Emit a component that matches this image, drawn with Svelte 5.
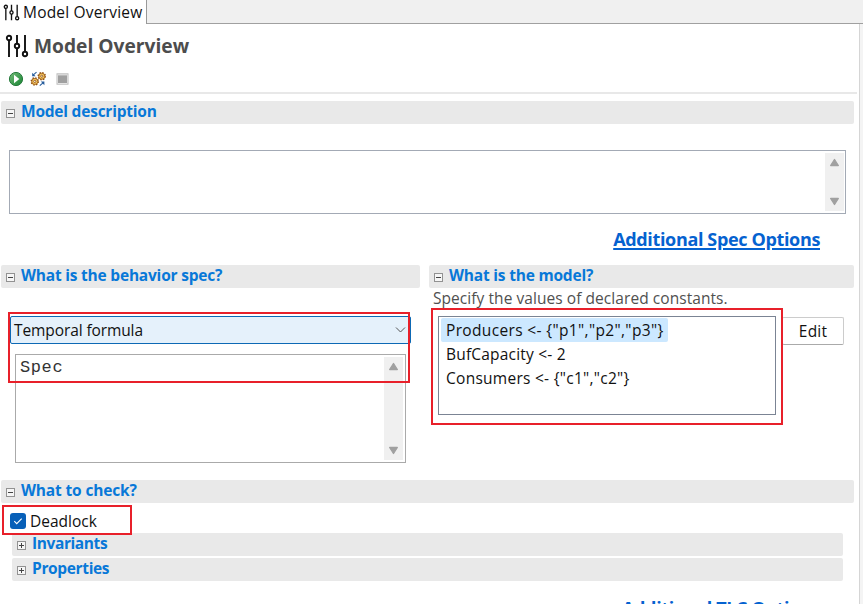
<script>
  const constants = [
    { text: 'Producers <- {"p1","p2","p3"}', selected: true, ls: 0.35 },
    { text: 'BufCapacity <- 2', ls: 0.2 },
    { text: 'Consumers <- {"c1","c2"}', ls: 0.27 },
  ];
</script>

{#snippet sliders(size)}
  <svg width={size} height={size} viewBox="0 0 24 24" fill="none" stroke="#111" stroke-width="1.9">
    <circle cx="4" cy="4" r="2.2" /><path d="M4 6.2V23" />
    <path d="M12 1v8.8M12 14.2V23" /><circle cx="12" cy="12" r="2.2" />
    <path d="M20 1v16.8" /><circle cx="20" cy="20" r="2.2" />
  </svg>
{/snippet}

{#snippet toggle(open)}
  <svg class="toggle" width="9" height="9" viewBox="0 0 9 9" shape-rendering="crispEdges">
    <rect x=".5" y=".5" width="8" height="8" fill="#f6f6f6" stroke="#929292" />
    <path d="M2 4.5h5" stroke="#444" />
    {#if !open}<path d="M4.5 2v5" stroke="#444" />{/if}
  </svg>
{/snippet}

{#snippet bar(title, open, ls)}
  <div class="bar">{@render toggle(open)}<b style:letter-spacing="{ls}px">{title}</b></div>
{/snippet}

{#snippet scrollbar()}
  <div class="scroll">
    <svg width="11" height="9" viewBox="0 0 11 9"><path d="M5.5 1.5 9.3 7.5H1.7z" fill="#a0a0a0" stroke="#a0a0a0" stroke-width="1.4" stroke-linejoin="round" /></svg>
    <svg width="11" height="9" viewBox="0 0 11 9"><path d="M5.5 7.5 9.3 1.5H1.7z" fill="#a0a0a0" stroke="#a0a0a0" stroke-width="1.4" stroke-linejoin="round" /></svg>
  </div>
{/snippet}

<div class="window">
  <div class="tabs">
    <div class="tab">{@render sliders(17)}<span>Model Overview</span></div>
    <div class="rest"></div>
  </div>
  <div class="body">
    <main>
      <header>
        <h1>{@render sliders(24)}<span>Model Overview</span></h1>
        <div class="tools">
          <svg width="16" height="16" viewBox="0 0 16 16">
            <defs><linearGradient id="run" x2="1" y2="1"><stop stop-color="#75bd79" /><stop offset="1" stop-color="#168332" /></linearGradient></defs>
            <circle cx="8" cy="8" r="6.6" fill="url(#run)" stroke="#287b3e" />
            <path d="M6 3.8 11.3 8 6 12.2z" fill="#fff" />
          </svg>
          <svg width="17" height="16" viewBox="0 0 17 16">
            <g fill="#f7c95e" stroke="#8c4a12">
              <circle cx="4.8" cy="10.4" r="3.5" stroke-width="1.5" stroke-dasharray="1.4 1.35" />
              <circle cx="4.8" cy="10.4" r="3" stroke-width=".7" />
              <circle cx="11.8" cy="5.2" r="3.5" stroke-width="1.5" stroke-dasharray="1.4 1.35" />
              <circle cx="11.8" cy="5.2" r="3" stroke-width=".7" />
            </g>
            <circle cx="4.8" cy="10.4" r="1.1" fill="#fff" stroke="#8c4a12" stroke-width=".8" />
            <circle cx="11.8" cy="5.2" r="1.1" fill="#fff" stroke="#8c4a12" stroke-width=".8" />
            <g fill="#245b9b" stroke="#245b9b" stroke-width="1.1">
              <path d="M6.5 1.2 3.4 3.8" /><path d="M2.2 1.8v3.4h3.4z" stroke="none" />
              <path d="M9.8 14.6l3.2-2.8" /><path d="M10.8 10.6h3.6v3.6z" stroke="none" />
            </g>
          </svg>
          <svg width="13" height="12" viewBox="0 0 13 12">
            <rect x="1" y=".8" width="11" height="10.4" fill="#f5f5f5" stroke="#bbb" />
            <rect x="2" y="3" width="9" height="7" fill="#a0a0a0" />
            <path d="M2 2.3h9" stroke="#aaa" />
          </svg>
        </div>
      </header>

      <section class="description">
        {@render bar('Model description', true, -0.22)}
        <div class="box">{@render scrollbar()}</div>
      </section>
      <div class="link"><a href="#spec">Additional Spec Options</a></div>

      <div class="columns">
        <section class="left">
          {@render bar('What is the behavior spec?', true, -0.21)}
          <div class="behavior">
            <div class="select"><span>Temporal formula</span>
              <svg width="11" height="8" viewBox="0 0 11 8" fill="none" stroke="#555"><path d="M1 1.5l4.5 4.5L10 1.5" /></svg>
            </div>
            <div class="box spec"><code>Spec</code>{@render scrollbar()}</div>
            <div class="mark mark-spec"></div>
          </div>
        </section>
        <section class="right">
          {@render bar('What is the model?', true, -0.2)}
          <p>Specify the values of declared constants.</p>
          <div class="model">
            <div class="list">
              {#each constants as c}
                <div class="item" class:selected={c.selected}><span style:letter-spacing="{c.ls}px">{c.text}</span></div>
              {/each}
              <div class="mark mark-list"></div>
            </div>
            <button>Edit</button>
          </div>
        </section>
      </div>

      <section class="check">
        {@render bar('What to check?', true, -0.15)}
        <div class="deadlock">
          <svg width="16" height="16" viewBox="0 0 16 16"><rect width="16" height="16" rx="3" fill="#0860b8" /><path d="M4.3 8.2l2.4 2.4 5-5" fill="none" stroke="#fff" stroke-width="1.1" /></svg>
          <span>Deadlock</span>
          <div class="mark mark-dead"></div>
        </div>
        <div class="subs">
          {@render bar('Invariants', false, -0.4)}
          {@render bar('Properties', false, -0.35)}
        </div>
      </section>
      <div class="link tlc"><a href="#tlc">Additional TLC Options</a></div>
    </main>
    <aside></aside>
  </div>
</div>

<style>
  :global(body) { background: #fff; }
  * { box-sizing: border-box; }
  .window { width: 863px; height: 604px; overflow: hidden; display: flex; flex-direction: column; background: #fff; color: #111; font: 15.5px/20px "Open Sans", "Noto Sans", sans-serif; white-space: nowrap; }
  svg { display: block; flex: none; }
  .tabs { display: flex; flex: none; height: 24px; }
  .tab { width: 147px; display: flex; align-items: center; gap: 3px; padding: 0 0 0 3px; border-right: 1px solid #999; letter-spacing: .2px; }
  .rest { flex: 1; background: #f0f0f0; border-bottom: 1px solid #a0a0a0; }
  .body { flex: 1; min-height: 0; display: flex; }
  main { width: 859px; flex: none; }
  aside { flex: 1; background: #f4f4f4; border-left: 1px solid #d5d5d5; }
  header { height: 70px; width: 857px; border-bottom: 2px solid #e8e8e8; padding: 9px 0 0 5px; }
  h1 { margin: 0; display: flex; gap: 5px; height: 25px; align-items: center; font-size: 19.2px; line-height: 25px; color: #4d4d4d; }
  .tools { display: flex; align-items: center; height: 16px; margin-top: 13px; padding-left: 3px; }
  .tools svg:nth-child(2) { margin: 0 9px 0 6px; }
  .bar { display: flex; align-items: center; height: 23px; padding-left: 5px; background: #e9e9e9; border-radius: 2px; color: #0878d8; font-size: 15.5px; }
  .toggle { margin: 1px 6px 0 0; }
  .bar b { line-height: 23px; position: relative; top: -1px; }
  .description { padding: 7px 0 0 1px; width: 854px; }
  .box { display: flex; justify-content: flex-end; border: 1px solid #a3aab5; background: #fff; padding: 2px; }
  .description .box { height: 64px; margin: 26px 8px 0; padding-right: 1px; }
  .scroll { width: 19px; background: #f0f0f0; display: flex; flex-direction: column; justify-content: space-between; align-items: center; padding: 5px 0; }
  .link { height: 51px; padding: 13px 39px 0 0; text-align: right; font-size: 18px; line-height: 25px; font-weight: 700; letter-spacing: -.35px; }
  .link a { color: #0562d0; text-underline-offset: 2px; text-decoration-thickness: 2px; }
  .columns { display: flex; gap: 9px; padding-left: 1px; height: 215px; }
  .left { width: 419px; }
  .right { width: 425px; }
  .behavior { position: relative; margin: 28px 9px 0 9px; }
  .select { height: 28px; display: flex; align-items: center; justify-content: space-between; border: 1px solid #0d69b5; background: #e5f1fb; border-radius: 2px; padding: 0 4px 0 3px; letter-spacing: -.1px; }
  .spec { height: 109px; width: 391px; margin: 10px 0 0 5px; border-color: #aaa; justify-content: space-between; }
  code { font: 17px/21px "Liberation Mono", monospace; letter-spacing: .6px; padding-left: 2px; color: #333; }
  .mark { position: absolute; border: 2px solid #e8202a; pointer-events: none; }
  .mark-spec { left: -2px; top: -4px; width: 402px; height: 71px; }
  p { margin: 0 0 0 4px; height: 28px; line-height: 20px; color: #505050; letter-spacing: .06px; }
  .model { display: flex; padding-left: 9px; }
  .list { position: relative; width: 338px; height: 99px; border: 1px solid #7b8494; padding: 1px; }
  .item { height: 24px; width: max-content; padding: 0 4px 0 5px; line-height: 24px; margin-left: 1px; }
  .selected { background: #cce8ff; border-radius: 2px; }
  .mark-list { left: -8px; top: -9px; width: 352px; height: 117px; }
  button { width: 62px; height: 28px; margin: 1px 0 0 6px; padding: 0; background: #fff; border: 1px solid #ccc; border-bottom-color: #aaa; border-radius: 2px; font: inherit; letter-spacing: .2px; color: #111; }
  .list { z-index: 1; }
  .check { width: 854px; padding-left: 1px; }
  .deadlock { position: relative; display: flex; align-items: center; gap: 4px; height: 30px; padding: 6px 0 0 9px; }
  .mark-dead { left: 1px; top: 2px; width: 130px; height: 30px; }
  .subs { margin: 0 11px 0 11px; display: flex; flex-direction: column; gap: 2px; }
  .tlc { padding: 15px 39px 0 0; }
</style>
